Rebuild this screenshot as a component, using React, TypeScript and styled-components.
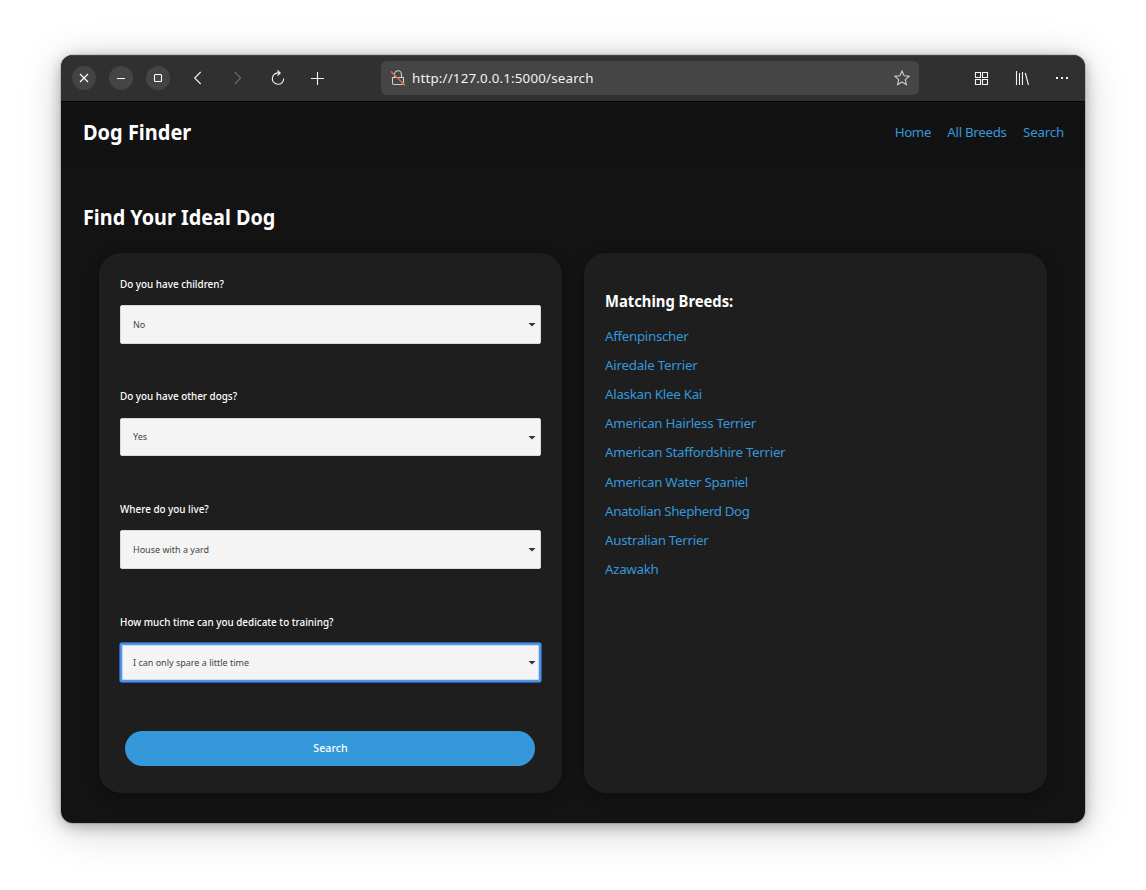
import React from "react";
import styled, { createGlobalStyle } from "styled-components";

const Global = createGlobalStyle`
  *, *::before, *::after { box-sizing: border-box; }
  html, body { margin: 0; background: #fff; }
  body { font-family: "Noto Sans", "Open Sans", sans-serif; overflow: hidden; }
  h1, h2, h3, ul { margin: 0; padding: 0; }
`;

const Desktop = styled.div`
  height: 890px;
  padding: 55px 61px 67px;
`;

const Window = styled.div`
  height: 768px;
  display: flex;
  flex-direction: column;
  border-radius: 12px;
  overflow: hidden;
  background: #131313;
  box-shadow: 0 0 0 1px rgba(0, 0, 0, 0.12), 0 3px 14px rgba(0, 0, 0, 0.28), 0 6px 42px rgba(0, 0, 0, 0.2);
`;

const Toolbar = styled.header`
  height: 47px;
  flex: none;
  display: flex;
  align-items: center;
  padding: 0 11px 1px;
  background: #303030;
  border-bottom: 1px solid #050505;
  box-shadow: inset 0 1px 0 #414242;
`;

const Controls = styled.div`
  display: flex;
  gap: 13px;
`;

const RoundButton = styled.button`
  width: 24px;
  height: 24px;
  padding: 0;
  border: 0;
  border-radius: 50%;
  background: #444;
  color: #fff;
  display: grid;
  place-items: center;
`;

const Actions = styled.div<{ $left: number; $gap: number }>`
  display: flex;
  gap: ${(p) => p.$gap}px;
  margin-left: ${(p) => p.$left}px;
`;

const IconButton = styled.button<{ $dim?: boolean }>`
  width: 16px;
  height: 16px;
  padding: 0;
  border: 0;
  background: none;
  color: ${(p) => (p.$dim ? "#6b6b6b" : "#f4f4f4")};
  display: block;
`;

const Glyph = styled.svg`
  display: block;
  width: 16px;
  height: 16px;
  fill: none;
  stroke: currentColor;
  stroke-width: 1.1;
`;

const Address = styled.div`
  width: 538px;
  height: 34px;
  margin-left: 55px;
  padding: 0 9px;
  display: flex;
  align-items: center;
  border-radius: 6px;
  background: #454545;
  color: #cfcfcf;
`;

const Url = styled.span`
  flex: 1;
  margin-left: 6px;
  color: #f2f2f2;
  font-size: 13.33px;
  line-height: 18px;
  letter-spacing: 0.19px;
`;

const Nav = styled.nav`
  height: 66px;
  flex: none;
  display: flex;
  align-items: center;
  justify-content: space-between;
  padding: 0 21px 6px 21.5px;
  background: #121212;
`;

const Title = styled.h1<{ $scale: number }>`
  color: #fff;
  font-size: 21.3px;
  line-height: 28px;
  font-weight: 700;
  white-space: nowrap;
  transform: scaleX(${(p) => p.$scale});
  transform-origin: left center;
`;

const NavLinks = styled.div`
  display: flex;
  gap: 16.3px;
`;

const Link = styled.a<{ $spacing?: number }>`
  display: block;
  color: #3498db;
  font-size: 13.33px;
  line-height: 18px;
  white-space: nowrap;
  letter-spacing: ${(p) => p.$spacing ?? 0}px;
`;

const Main = styled.main`
  padding: 35px 22px 0 21.5px;
`;

const Columns = styled.div`
  display: grid;
  grid-template-columns: 463px 463px;
  gap: 22px;
  margin: 22px 0 0 16.5px;
`;

const Card = styled.section<{ $top: number }>`
  height: 540px;
  padding: ${(p) => p.$top}px 21px 0;
  border-radius: 22px;
  background: #1e1e1e;
  box-shadow: 0 4px 14px rgba(0, 0, 0, 0.28);
`;

const Field = styled.div`
  height: 112.7px;
`;

const Label = styled.label`
  display: block;
  margin-bottom: 13.4px;
  color: #fff;
  font-size: 10.67px;
  font-weight: 500;
  line-height: 16px;
  white-space: nowrap;
  transform: scaleX(0.927);
  transform-origin: left center;
`;

const SelectBox = styled.div<{ $focused?: boolean }>`
  height: 38.7px;
  display: flex;
  align-items: center;
  justify-content: space-between;
  padding: 0.5px 4.5px 0 12px;
  border: 1px solid #d9d9d9;
  border-radius: 2px;
  background: #f4f4f4;
  color: #444;
  font-size: 9px;
  line-height: 14px;
  ${(p) => p.$focused && "border-color: #4a8ee8; box-shadow: inset 0 0 0 1.3px #5294ea, 0 0 0 0.7px #3478d6;"}
`;

const Arrow = styled.svg`
  width: 8px;
  height: 5px;
  display: block;
  fill: #2e3436;
`;

const SubmitButton = styled.button`
  display: block;
  width: 410px;
  height: 35px;
  margin: 4.6px 0 0 5px;
  padding: 0 0 1px 1px;
  border: 0;
  border-radius: 18px;
  background: #3498db;
  color: #fff;
  font: 500 10.67px/16px "Noto Sans", sans-serif;
`;

const Subtitle = styled.h3`
  color: #fff;
  font-size: 16px;
  font-weight: 700;
  line-height: 22px;
  transform: scaleX(0.923);
  transform-origin: left center;
`;

const BreedList = styled.ul`
  list-style: none;
  margin-top: 15px;
  li { height: 29.12px; }
`;

const fields = [
  { label: "Do you have children?", value: "No" },
  { label: "Do you have other dogs?", value: "Yes" },
  { label: "Where do you live?", value: "House with a yard" },
  { label: "How much time can you dedicate to training?", value: "I can only spare a little time", focused: true },
];

const breeds: [string, number][] = [
  ["Affenpinscher", -0.3],
  ["Airedale Terrier", -0.24],
  ["Alaskan Klee Kai", -0.28],
  ["American Hairless Terrier", -0.28],
  ["American Staffordshire Terrier", -0.29],
  ["American Water Spaniel", -0.3],
  ["Anatolian Shepherd Dog", -0.39],
  ["Australian Terrier", -0.26],
  ["Azawakh", -0.3],
];

const Icon = ({ children }: { children: React.ReactNode }) => <Glyph viewBox="0 0 16 16">{children}</Glyph>;

export default function App() {
  return (
    <>
      <Global />
      <Desktop>
        <Window>
          <Toolbar>
            <Controls>
              <RoundButton aria-label="Close"><Icon><path d="M4 4l8 8M12 4l-8 8" strokeWidth="1.2" /></Icon></RoundButton>
              <RoundButton aria-label="Minimize"><Icon><path d="M4 8.5h8" /></Icon></RoundButton>
              <RoundButton aria-label="Maximize"><Icon><rect x="4.5" y="4.5" width="7" height="7" rx="1" /></Icon></RoundButton>
            </Controls>
            <Actions $left={20} $gap={24}>
              <IconButton aria-label="Back"><Icon><path d="M10.7 2L4.7 8l6 6" /></Icon></IconButton>
              <IconButton aria-label="Forward" $dim><Icon><path d="M4.7 2l6 6-6 6" /></Icon></IconButton>
              <IconButton aria-label="Reload"><Icon><path d="M10 2.9H8A5.7 5.7 0 1 0 13.7 8.5M7.5.5L10.2 3 7.5 5.7" /></Icon></IconButton>
              <IconButton aria-label="New tab"><Icon><path d="M7.5 2v13M1 8.5h13" /></Icon></IconButton>
            </Actions>
            <Address>
              <Icon>
                <path d="M4.5 7V4.7C4.5 2.7 5.9.7 8 .7s3.5 2 3.5 4V7M2.5 7.5h11V13a1.5 1.5 0 0 1-1.5 1.5H4A1.5 1.5 0 0 1 2.5 13z" />
                <path d="M1 1.5l14 14" stroke="#e36b58" strokeWidth="1.2" />
              </Icon>
              <Url>http://127.0.0.1:5000/search</Url>
              <Icon><path d="M8 1l2.1 4.7 5 .5-3.8 3.4 1.1 5L8 12l-4.4 2.6 1.1-5L.9 6.2l5-.5z" /></Icon>
            </Address>
            <Actions $left={54} $gap={24}>
              <IconButton aria-label="Overview"><Icon><path d="M2.5 2.5h5v5h-5zM9.5 2.5h5v5h-5zM2.5 9.5h5v5h-5zM9.5 9.5h5v5h-5z" /></Icon></IconButton>
              <IconButton aria-label="Library"><Icon><path d="M3.5 1v14M6.5 3v12M9.5 2v13M12.3 3l3.2 12" /></Icon></IconButton>
              <IconButton aria-label="Menu"><Icon><path d="M3 7h2v2H3zM8 7h2v2H8zM13 7h2v2h-2z" fill="currentColor" stroke="none" /></Icon></IconButton>
            </Actions>
          </Toolbar>
          <Nav>
            <Title $scale={0.937}>Dog Finder</Title>
            <NavLinks>
              <Link $spacing={-0.4}>Home</Link>
              <Link $spacing={-0.3}>All Breeds</Link>
              <Link $spacing={-0.2}>Search</Link>
            </NavLinks>
          </Nav>
          <Main>
            <Title as="h2" $scale={0.93}>Find Your Ideal Dog</Title>
            <Columns>
              <Card $top={22.6}>
                {fields.map((f) => (
                  <Field key={f.label}>
                    <Label>{f.label}</Label>
                    <SelectBox $focused={f.focused}>
                      <span>{f.value}</span>
                      <Arrow viewBox="0 0 8 5"><path d="M.5 1h7L4 4.5z" /></Arrow>
                    </SelectBox>
                  </Field>
                ))}
                <SubmitButton>Search</SubmitButton>
              </Card>
              <Card $top={37}>
                <Subtitle>Matching Breeds:</Subtitle>
                <BreedList>
                  {breeds.map(([name, spacing]) => (
                    <li key={name}><Link $spacing={spacing}>{name}</Link></li>
                  ))}
                </BreedList>
              </Card>
            </Columns>
          </Main>
        </Window>
      </Desktop>
    </>
  );
}
